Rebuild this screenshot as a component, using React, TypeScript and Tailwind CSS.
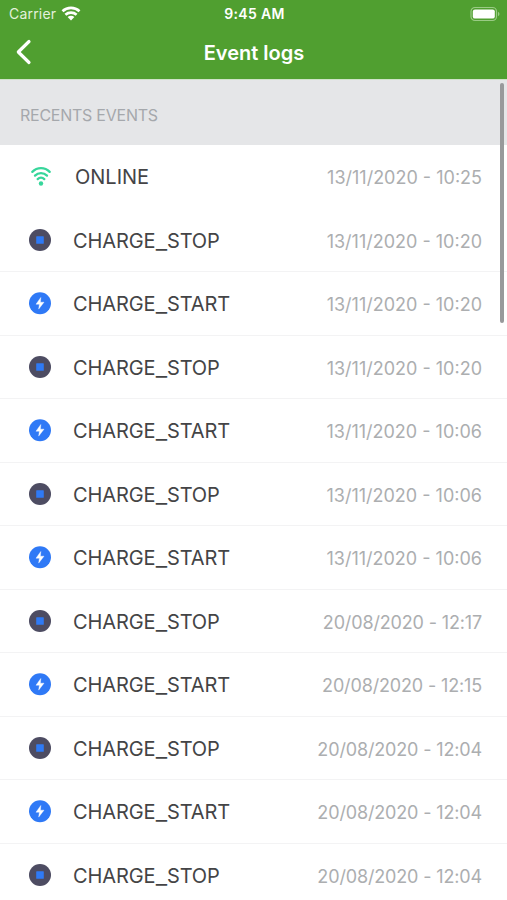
import React from "react";

type EventType = "ONLINE" | "CHARGE_STOP" | "CHARGE_START";

const events: { type: EventType; date: string }[] = [
  { type: "ONLINE", date: "13/11/2020 - 10:25" },
  { type: "CHARGE_STOP", date: "13/11/2020 - 10:20" },
  { type: "CHARGE_START", date: "13/11/2020 - 10:20" },
  { type: "CHARGE_STOP", date: "13/11/2020 - 10:20" },
  { type: "CHARGE_START", date: "13/11/2020 - 10:06" },
  { type: "CHARGE_STOP", date: "13/11/2020 - 10:06" },
  { type: "CHARGE_START", date: "13/11/2020 - 10:06" },
  { type: "CHARGE_STOP", date: "20/08/2020 - 12:17" },
  { type: "CHARGE_START", date: "20/08/2020 - 12:15" },
  { type: "CHARGE_STOP", date: "20/08/2020 - 12:04" },
  { type: "CHARGE_START", date: "20/08/2020 - 12:04" },
  { type: "CHARGE_STOP", date: "20/08/2020 - 12:04" },
];

function EventIcon({ type }: { type: EventType }) {
  if (type === "ONLINE") {
    return (
      <svg width="24" height="24" viewBox="0 0 24 24" fill="none" stroke="#37d69b" strokeWidth="2.3" strokeLinecap="round">
        <path d="M4.3 7.9 C9.2 2.8 16.8 2.8 21.7 7.9" />
        <path d="M7 11.6 C10.4 8.2 15.6 8.2 19 11.6" />
        <path d="M9.7 15.1 C11.6 13.2 14.4 13.2 16.3 15.1" />
        <circle cx="13" cy="19.5" r="2.2" fill="#37d69b" stroke="none" />
      </svg>
    );
  }
  if (type === "CHARGE_STOP") {
    return (
      <svg width="24" height="24" viewBox="0 0 24 24">
        <circle cx="12" cy="12" r="11" fill="#4d4c62" />
        <rect x="8.2" y="8.2" width="7.6" height="7.6" rx="0.6" fill="#2f7af5" />
      </svg>
    );
  }
  return (
    <svg width="24" height="24" viewBox="0 0 24 24">
      <circle cx="12" cy="12.3" r="11" fill="#2f79f6" />
      <path d="M12.8 6.5 L8 13.2 H11.4 L10.7 18.1 L16 11.2 H12.4 Z" fill="#fff" stroke="#fff" strokeWidth="0.4" strokeLinejoin="round" />
    </svg>
  );
}

function EventName({ type }: { type: EventType }) {
  const [first, second] = type.split("_");
  if (!second) {
    return <span className="ml-[23px] pt-[2px] text-[20px] leading-none text-[#444446]">{first}</span>;
  }
  return (
    <span className="ml-[21px] pt-[2px] text-[20px] leading-none tracking-[-0.1px] text-[#444446]">
      {first}
      <span className="mx-[1.2px] inline-block translate-y-px scale-x-125">_</span>
      {second}
    </span>
  );
}

function StatusBar() {
  return (
    <div className="grid h-7 grid-cols-3 items-center pl-[9px] pr-[7px] text-white">
      <div className="flex items-center gap-[5px]">
        <span className="text-[14px] leading-none tracking-[0.2px] text-[#e3f1dc]">Carrier</span>
        <svg className="mb-px" width="20" height="16" viewBox="0 0 20 16" fill="none" stroke="#fff" strokeWidth="2.7">
          <path d="M1.5 5.2 C6.3 0.8 13.7 0.8 18.5 5.2" />
          <path d="M4.4 8.7 C7.6 5.9 12.4 5.9 15.6 8.7" />
          <path d="M6.6 10.9 C8.6 9.3 11.4 9.3 13.4 10.9 L10 14.6 Z" fill="#fff" stroke="none" />
        </svg>
      </div>
      <span className="text-center text-[14px] font-semibold leading-none tracking-[0.35px]">9:45 AM</span>
      <svg className="mb-px justify-self-end" width="30" height="16" viewBox="0 0 30 16">
        <rect x="1" y="1.5" width="25.5" height="13" rx="4" fill="none" stroke="#9acb85" strokeWidth="1.2" />
        <rect x="2.8" y="3.4" width="22" height="9.2" rx="2.2" fill="#fff" />
        <path d="M28 5.8 C30 6.6 30 9.4 28 10.2 Z" fill="#9acb85" />
      </svg>
    </div>
  );
}

export default function App() {
  return (
    <div className="relative h-[900px] w-[507px] overflow-hidden bg-white font-['Inter',sans-serif]">
      <header className="h-[79px] bg-[#509f30]">
        <StatusBar />
        <div className="grid h-12 grid-cols-[1fr_auto_1fr] items-center text-white">
          <svg className="ml-4" width="16" height="26" viewBox="0 0 16 26" fill="none" stroke="#fff" strokeWidth="3.2" strokeLinecap="round" strokeLinejoin="round">
            <path d="M13 2.5 L2.3 13 L13 23.5" />
          </svg>
          <h1 className="pl-px pt-px text-[20px] font-semibold leading-none">Event logs</h1>
        </div>
      </header>
      <div className="flex h-[66px] items-center border-t border-[#cfe3c8] bg-[#e5e6e8] pl-[20px] pt-[5px]">
        <h2 className="text-[16px] leading-none tracking-[-0.25px] text-[#a5a8ac]">RECENTS EVENTS</h2>
      </div>
      <ul>
        {events.map((event, i) => (
          <li
            key={i}
            className={`flex h-[63.5px] items-center border-b pr-[25px] pl-7 ${i === 0 ? "border-transparent" : "border-[#f3f3f4]"}`}
          >
            <EventIcon type={event.type} />
            <EventName type={event.type} />
            <time
              className={`ml-auto pt-[4px] text-[18px] leading-none text-[#acaeb0] ${event.date.startsWith("20") ? "tracking-[-0.15px]" : ""}`}
            >
              {event.date}
            </time>
          </li>
        ))}
      </ul>
      <div className="absolute right-[3px] top-[83px] h-[240px] w-[4px] rounded-full bg-[#98999b]" />
    </div>
  );
}
